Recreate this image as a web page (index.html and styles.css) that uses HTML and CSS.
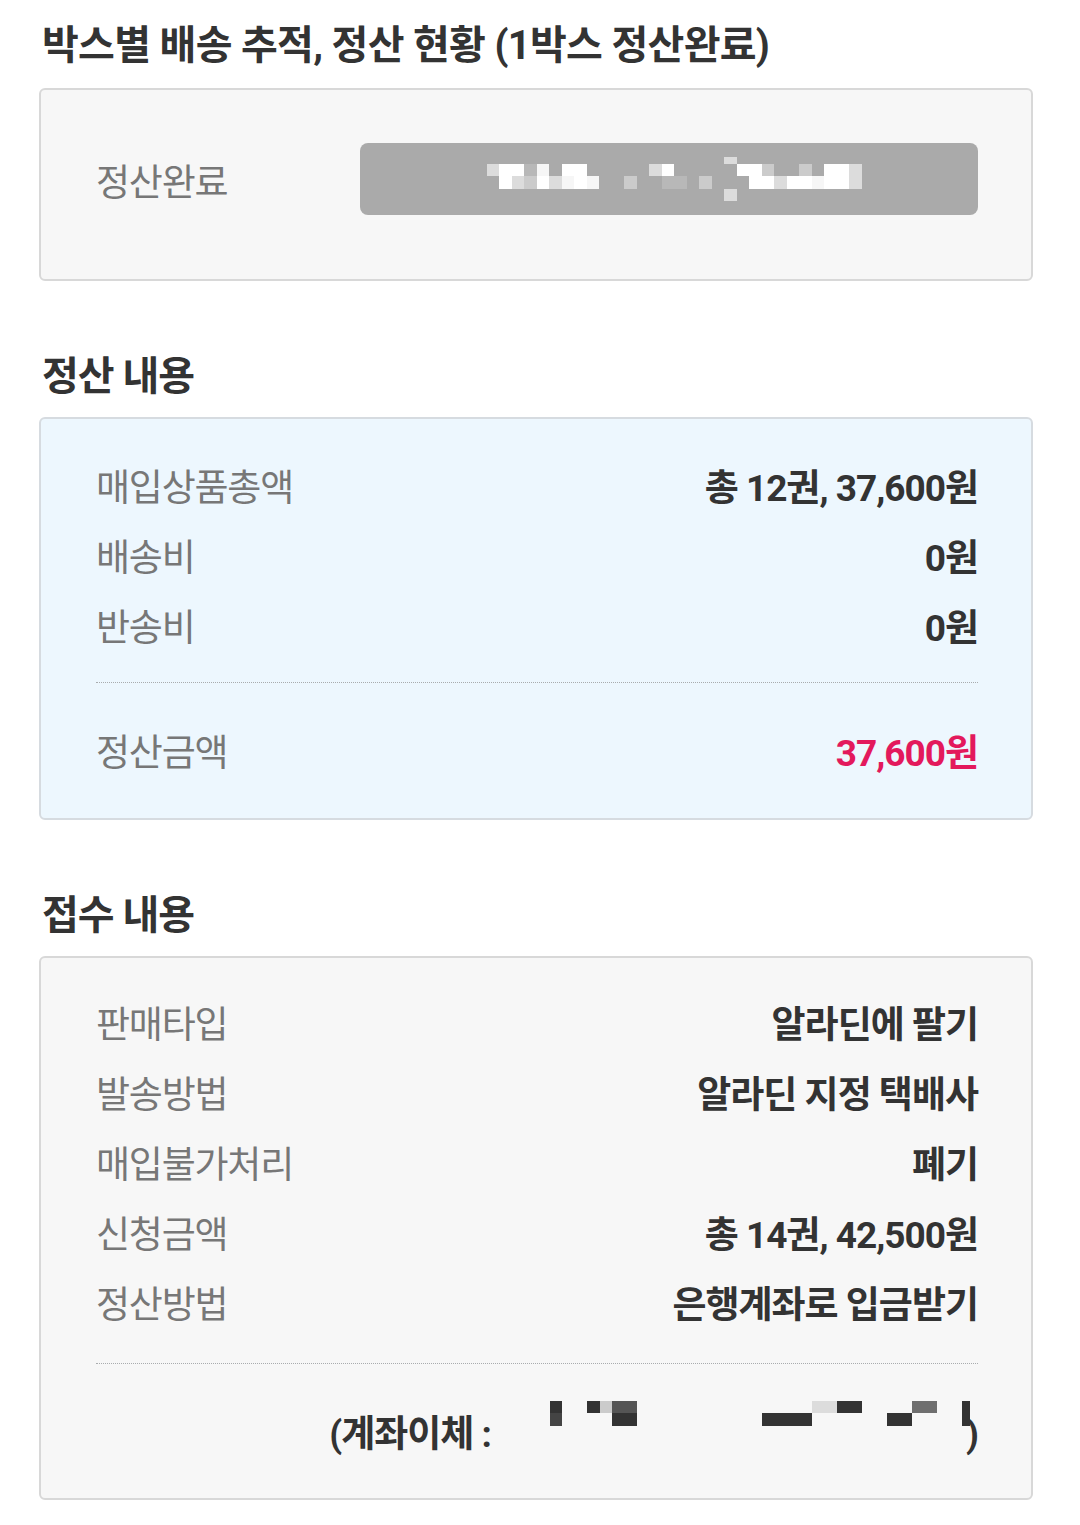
FILE: index.html
```html
<!DOCTYPE html>
<html lang="ko">
<head>
  <meta charset="UTF-8">
  <meta name="viewport" content="width=device-width, initial-scale=1">
  <title>박스별 배송 추적, 정산 현황</title>
  <link rel="stylesheet" href="styles.css">
</head>
<body>

  <div class="page">
    <h1 class="title">박스별 배송 추적, 정산 현황 (1박스 정산완료)</h1>

    <!-- 박스 상태 -->
    <div class="box status-box">
      <div class="label status-label">정산완료</div>
      <div class="pill">
        <div class="mosaic">
          <div class="m-row h7"><i class="x19"></i><i class="x1 kd"></i></div>
          <div class="m-row h12">
            <i class="x1 kd"></i><i class="x2 kw"></i><i class="x1 kb"></i><i class="x1 kf"></i><i class="x1"></i>
            <i class="x2 kw"></i><i class="x5"></i><i class="x1 kd"></i><i class="x1 kw"></i><i class="x5"></i>
            <i class="x2 kw"></i><i class="x1 kc"></i><i class="x2"></i><i class="x1 kc"></i><i class="x1"></i>
            <i class="x2 kw"></i><i class="x1 kd"></i>
          </div>
          <div class="m-row h13">
            <i class="x1"></i><i class="x1 kw"></i><i class="x1 kd"></i><i class="x1 kc"></i><i class="x1 kw"></i>
            <i class="x1 kd"></i><i class="x1 kf"></i><i class="x1 kw"></i><i class="x1 kf"></i><i class="x2"></i>
            <i class="x1 kc"></i><i class="x2"></i><i class="x2 kb"></i><i class="x1"></i><i class="x1 kc"></i>
            <i class="x3"></i><i class="x2 kw"></i><i class="x1 kd"></i><i class="x2 kw"></i><i class="x1 kf"></i>
            <i class="x2 kw"></i><i class="x1 kd"></i>
          </div>
          <div class="m-row h12"><i class="x19"></i><i class="x1 kd"></i></div>
        </div>
      </div>
    </div>

    <!-- 정산 내용 -->
    <h2 class="section-title">정산 내용</h2>
    <div class="box info-box">
      <div class="row">
        <div class="label">매입상품총액</div>
        <div class="value">총 12권, 37,600원</div>
      </div>
      <div class="row">
        <div class="label">배송비</div>
        <div class="value">0원</div>
      </div>
      <div class="row">
        <div class="label">반송비</div>
        <div class="value">0원</div>
      </div>
      <div class="divider"></div>
      <div class="row">
        <div class="label">정산금액</div>
        <div class="value total">37,600원</div>
      </div>
    </div>

    <!-- 접수 내용 -->
    <h2 class="section-title">접수 내용</h2>
    <div class="box receipt-box">
      <div class="row">
        <div class="label">판매타입</div>
        <div class="value">알라딘에 팔기</div>
      </div>
      <div class="row">
        <div class="label">발송방법</div>
        <div class="value">알라딘 지정 택배사</div>
      </div>
      <div class="row">
        <div class="label">매입불가처리</div>
        <div class="value">폐기</div>
      </div>
      <div class="row">
        <div class="label">신청금액</div>
        <div class="value">총 14권, 42,500원</div>
      </div>
      <div class="row">
        <div class="label">정산방법</div>
        <div class="value">은행계좌로 입금받기</div>
      </div>
      <div class="divider"></div>
      <div class="row account-row">
        <span class="value">(계좌이체 :</span>
        <div class="mosaic account-mosaic">
          <div class="m-row h12">
            <i class="x1"></i><i class="x1 k3"></i><i class="x2"></i><i class="x1 k3"></i><i class="x1 kc"></i>
            <i class="x2 k5"></i><i class="x14"></i><i class="x2 kd"></i><i class="x2 k3"></i><i class="x4"></i>
            <i class="x2 k7"></i><i class="x2"></i><i class="xe k3"></i>
          </div>
          <div class="m-row h13">
            <i class="x1"></i><i class="x1 k4"></i><i class="x4"></i><i class="x2 k3"></i><i class="x10"></i>
            <i class="x4 k3"></i><i class="x5"></i><i class="x1"></i><i class="x2 k3"></i><i class="x4"></i>
            <i class="xe k3"></i>
          </div>
        </div>
        <span class="value paren">)</span>
      </div>
    </div>
  </div>

</body>
</html>
```

FILE: styles.css
```css
/* Reset */
* { box-sizing: border-box; margin: 0; padding: 0; }

body {
  background: #fff;
  font-family: Roboto, "Noto Sans CJK KR", "Noto Sans", sans-serif;
  color: #333;
}

.page {
  width: 994px;
  margin-left: 39px;
  padding-top: 18px;
  padding-bottom: 20px;
}

/* Headings */
.title {
  font-size: 40px;
  font-weight: 700;
  line-height: 56px;
  letter-spacing: -0.7px;
  margin-left: 3px;
  margin-bottom: 14px;
}
.section-title {
  font-size: 40px;
  font-weight: 700;
  line-height: 56px;
  letter-spacing: -1px;
  margin: 68px 0 12px 3px;
}

/* Boxes */
.box {
  background: #f7f7f7;
  border: 2px solid #d8d8d8;
  border-radius: 6px;
  padding: 28px 53px 33px 55px;
}
.info-box {
  background: #edf7fe;
  border-color: #d6dbe0;
  padding-top: 31px;
}
.receipt-box {
  padding-top: 29px;
  padding-bottom: 32px;
}
.receipt-box .divider { margin-top: 26px; }
.status-box {
  display: flex;
  align-items: center;
  padding: 53px 53px 64px 55px;
}

/* Rows */
.row {
  display: flex;
  justify-content: space-between;
  align-items: center;
  height: 70px;
  padding-top: 7px;
}
.label {
  color: #777;
  font-size: 37px;
  letter-spacing: -1.2px;
  line-height: 63px;
}
.value {
  color: #333;
  font-size: 37px;
  font-weight: 700;
  letter-spacing: -1px;
  line-height: 63px;
}
.value.total { color: #e3195c; }

.divider {
  border-top: 1px dotted #a9acae;
  margin: 22px 0 32px;
}

/* Status pill */
.status-label {
  flex: 0 0 264px;
  line-height: 62px;
  padding-top: 10px;
}
.pill {
  flex: 1;
  height: 72px;
  background: #aaa;
  border-radius: 8px;
  display: flex;
  justify-content: center;
  align-items: center;
  padding-left: 10px;
}

/* Pixelated (masked) text */
.mosaic {
  display: flex;
  flex-direction: column;
}
.m-row { display: flex; }
.m-row i { display: block; height: 100%; }
.h7 { height: 7px; }
.h12 { height: 12px; }
.h13 { height: 13px; }
.x1 { width: 12.5px; }
.x2 { width: 25px; }
.x3 { width: 37.5px; }
.x4 { width: 50px; }
.x5 { width: 62.5px; }
.x10 { width: 125px; }
.x14 { width: 175px; }
.x19 { width: 237.5px; }
.xe { width: 8px; }
.kw { background: #fff; }
.kf { background: #f6f6f6; }
.kd { background: #dcdcdc; }
.kc { background: #cbcbcb; }
.kb { background: #b8b8b8; }
.k7 { background: #6f6f6f; }
.k5 { background: #555; }
.k4 { background: #444; }
.k3 { background: #333; }

/* Account row */
.account-row {
  justify-content: flex-end;
}
.account-mosaic {
  align-self: flex-start;
  margin-top: -2px;
  margin-left: 46px;
}
.paren { margin-left: -4px; }
```
